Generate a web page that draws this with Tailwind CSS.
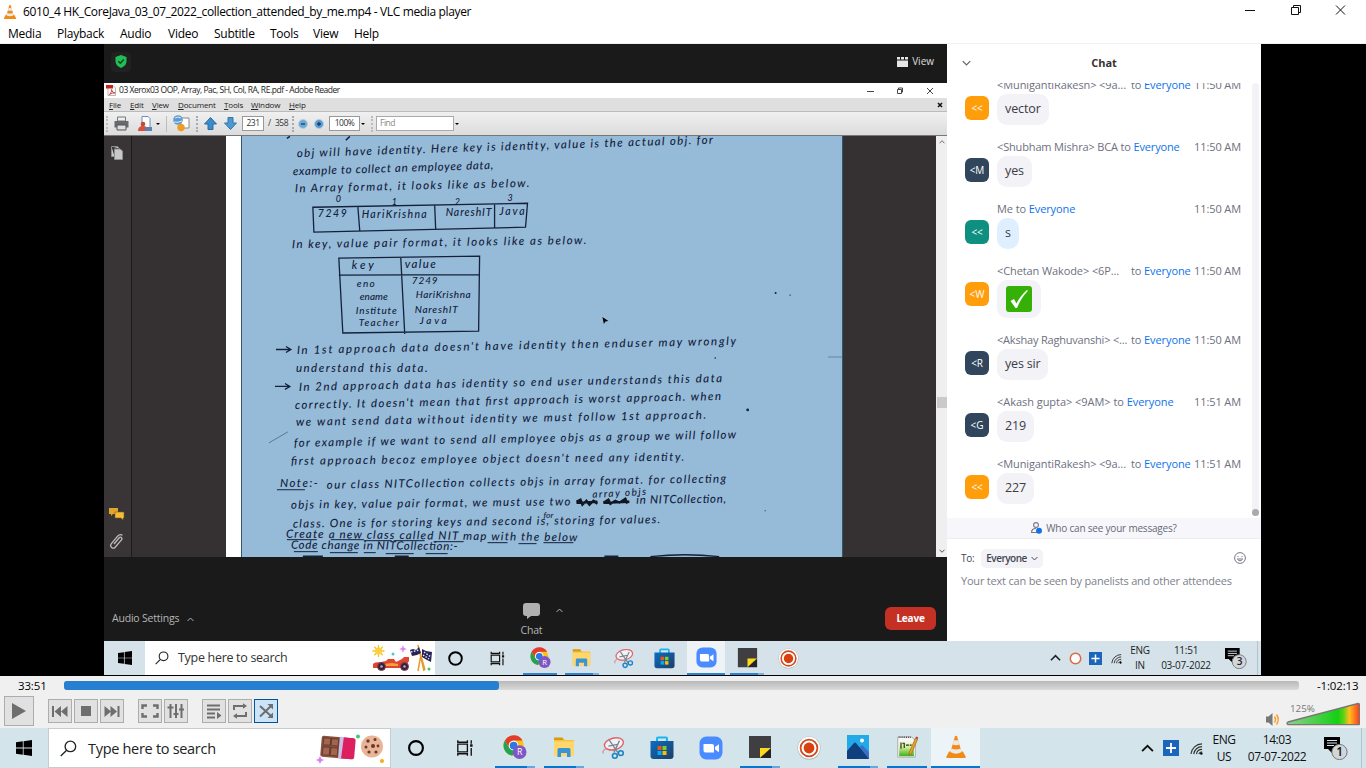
<!DOCTYPE html>
<html lang="en">
<head>
<meta charset="utf-8">
<title>VLC media player</title>
<script src="https://cdn.jsdelivr.net/npm/@tailwindcss/browser@4"></script>
</head>
<body class="w-[1366px] h-[768px] overflow-hidden flex flex-col bg-white text-black font-['Open_Sans','Noto_Sans',sans-serif]">
<svg width="0" height="0" class="absolute">
  <defs>
    <linearGradient id="sky" x1="0" y1="0" x2="1" y2="1"><stop offset="0" stop-color="#0a6fc4"/><stop offset="1" stop-color="#1f3d66"/></linearGradient>
    <linearGradient id="vol" x1="0" x2="1" y1="0" y2="0"><stop offset="0" stop-color="#8fd08f"/><stop offset=".7" stop-color="#14d014"/><stop offset=".78" stop-color="#5fd014"/><stop offset=".86" stop-color="#ffc01e"/><stop offset="1" stop-color="#ff3c1e"/></linearGradient>
    <linearGradient id="npp" x1="0" x2="0" y1="0" y2="1"><stop offset="0" stop-color="#f4fbe8"/><stop offset=".4" stop-color="#d3f08f"/><stop offset="1" stop-color="#3fae1f"/></linearGradient>
    <symbol id="win" viewBox="0 0 16 16"><path d="M0 2.2 6.8 1.3V7.6H0zM7.6 1.2 16 0V7.6H7.6zM0 8.4H6.8V14.7L0 13.8zM7.6 8.4H16V16L7.6 14.8z"/></symbol>
    <symbol id="find" viewBox="0 0 18 18"><g fill="none" stroke="#222" stroke-width="1.4"><circle cx="11" cy="6.8" r="5.6"/><path d="M7 10.8.8 17"/></g></symbol>
    <symbol id="ring" viewBox="0 0 18 18"><circle cx="9" cy="9" r="7.2" fill="none" stroke="#000" stroke-width="2.2"/></symbol>
    <symbol id="tv" viewBox="0 0 18 18"><g fill="none" stroke="#111" stroke-width="1.4"><path d="M1.500 5h10v8h-10zM1.500 1v2h10V1M1.500 17v-2h10v2M15.500 1v3.500M15.500 9v8"/></g><path d="M14.300 5h2.600v2.800h-2.600z" fill="#111"/></symbol>
    <symbol id="chrome" viewBox="0 0 26 26"><circle cx="11.500" cy="11.500" r="11" fill="#fbc116"/><path d="M2 6A11 11 0 0 1 21.200 6H11.500a5.500 5.500 0 0 0-5 7.800z" fill="#e33b2e"/><path d="M2 6a11 11 0 0 0 8 16.400l5-8.400a5.500 5.500 0 0 1-8.500-.2z" fill="#23a455"/><circle cx="11.500" cy="11.500" r="5.200" fill="#fff"/><circle cx="11.500" cy="11.500" r="4.200" fill="#2878e6"/><circle cx="18" cy="18.500" r="7.500" fill="#7e57c2"/><text x="18" y="22" font-size="9.500" text-anchor="middle" fill="#fff">R</text></symbol>
    <symbol id="folder" viewBox="0 0 24 24"><path d="M2 3h9l2 2h9v16H2z" fill="#f5c24a"/><path d="M2 2.500h8.500l1 2.500H2z" fill="#d89a12"/><path d="M2 6.500h20V21H2z" fill="#ffd76a"/><path d="M5.500 22v-7.500q0-1.500 1.500-1.500h10q1.500 0 1.500 1.500V22h-3.500v-4h-6v4z" fill="#3a93d6"/></symbol>
    <symbol id="snip" viewBox="0 0 26 26"><g fill="none"><ellipse cx="14" cy="8.500" rx="10.500" ry="6.300" transform="rotate(-14 14 8.500)" stroke="#e2606a" stroke-width="1.500" fill="#eef3f6"/><path d="M3 19Q0 17 5 14" stroke="#d99aa2" stroke-width="1.500"/><path d="M9 4.500 19 19M20 5 14 18M8 11l10-2" stroke="#7c858c" stroke-width="1.400"/><circle cx="15" cy="21.500" r="2.600" stroke="#1b84c4" stroke-width="1.700"/><circle cx="21.500" cy="18.500" r="2.600" stroke="#1b84c4" stroke-width="1.700"/></g></symbol>
    <symbol id="store" viewBox="0 0 24 24"><path d="M7 6V2.500q0-1 1-1h8q1 0 1 1V6" fill="none" stroke="#19b5ef" stroke-width="2"/><path d="M.5 5h23v15q0 3-3 3h-17q-3 0-3-3z" fill="url(#sky)"/><path d="M7.500 10h4v4h-4z" fill="#f1511b"/><path d="M12.500 10h4v4h-4z" fill="#80cc28"/><path d="M7.500 15h4v4h-4z" fill="#00adef"/><path d="M12.500 15h4v4h-4z" fill="#fbbc09"/></symbol>
    <symbol id="zoomi" viewBox="0 0 24 24"><rect x=".5" y=".5" width="23" height="23" rx="7" fill="#4a8cff"/><path d="M4.500 8h8.500q2 0 2 2v6.500H6.500q-2 0-2-2zM16 11l4-2.800v8L16 13.600z" fill="#fff"/></symbol>
    <symbol id="sticky" viewBox="0 0 24 24"><path d="M1 1h22v12l-11 10H1z" fill="#3f3f41"/><path d="M12 23V13h11z" fill="#ffd917"/><path d="M23 13v10H12z" fill="#242426"/></symbol>
    <symbol id="rec" viewBox="0 0 24 24"><circle cx="12" cy="12" r="11.500" fill="#a9aeb2"/><circle cx="12" cy="11.800" r="11" fill="#fff"/><circle cx="12" cy="12" r="8.400" fill="none" stroke="#cf4a1f" stroke-width="1.800"/><circle cx="12" cy="12" r="5.400" fill="#d8400f"/></symbol>
    <symbol id="photos" viewBox="0 0 24 24"><path d="M1 0h22v24H1z" fill="#22a9e8"/><path d="M12 24 10 16l6-6 7 7v7z" fill="#3b6fc9"/><path d="M1 16l7-8q1-1 2 0l13 16H1z" fill="#103f7e"/><circle cx="16" cy="5.500" r="2" fill="#fff"/></symbol>
    <symbol id="note" viewBox="0 0 24 26"><path d="M2 2h15l4 4v18H2z" fill="#f7f7f7" stroke="#999" stroke-width=".8"/><path d="M3.500 6.500h16V23h-16z" fill="url(#npp)"/><path d="M3 2.500h13" stroke="#444" stroke-dasharray="1 1" stroke-width="1.500"/><path d="M5.500 8v7M7 9h2v5M11 11h3M15 11h2" stroke="#222" fill="none" stroke-width="1.200"/><path d="M14.500 19 21 3.500l2.500 1L17 20l-2.700 2z" fill="#e8a12a" stroke="#8a5a12" stroke-width=".6"/><path d="m21 3.500.8-2 2.400 1-.7 2z" fill="#c7463a"/></symbol>
    <symbol id="cone" viewBox="0 0 24 26"><path d="M4.500 18h15l3 5.500q.3 1.500-.8 1.500H2.300q-1.100 0-.8-1.500z" fill="#f28a16"/><path d="M10.800 1.500q1.200-1.500 2.400 0L18.500 20q-6.500 3.500-13 0z" fill="#f28a16"/><path d="m9.600 5.500-1.400 4.800q3.800 1.500 7.600 0L14.400 5.500q-2.400 1-4.800 0zM7 14.500l-1.200 4q6.200 3.400 12.400 0L17 14.500q-5 2.500-10 0z" fill="#e9e9e9"/></symbol>
    <symbol id="chev" viewBox="0 0 12 8"><path d="m1 6.500 5-5 5 5" fill="none" stroke="currentColor" stroke-width="1.700"/></symbol>
    <symbol id="plus" viewBox="0 0 16 16"><path d="M0 0h16v16H0z" fill="#1b66bb"/><path d="M8 3v10M3 8h10" stroke="#fff" stroke-width="1.800"/></symbol>
    <symbol id="wifi" viewBox="0 0 14 14"><g fill="none" stroke="#333" stroke-width="1.200"><path d="M1 13A12 12 0 0 1 13 2M4 13A9 9 0 0 1 13 5M7 13a6 6 0 0 1 6-5M9.500 13A4 4 0 0 1 13 10.500"/></g><circle cx="12.200" cy="12.300" r="1.300"/></symbol>
    <symbol id="msg" viewBox="0 0 24 24"><path d="M0 1h16v12H8v4l-4-4H0z"/><path d="M3 4.500h10M3 7h10M3 9.500h7" stroke="#d5e2e9" stroke-width="1"/><circle cx="15.500" cy="16" r="7.600" fill="#d0d6da" stroke="#777" stroke-width="1"/></symbol>
  </defs>
</svg>

<!-- Title bar -->
<header class="h-[23px] shrink-0 flex items-center pl-[3px]">
  <svg class="w-[14px] h-[16px]"><use href="#cone"/></svg>
  <span class="ml-[6px] text-[12px] tracking-[-0.35px] whitespace-nowrap">6010_4 HK_CoreJava_03_07_2022_collection_attended_by_me.mp4 - VLC media player</span>
  <svg class="ml-auto mr-[17px] -mt-[3px] w-[104px] h-[14px]" viewBox="0 0 104 14" fill="none" stroke="#111"><path d="M0 7.500h10M46.500 4.500h7v7h-7zM48.500 4V2.500h7v7H54M91 2.500l9 9M100 2.500l-9 9"/></svg>
</header>
<nav class="h-[21px] shrink-0 flex items-center pl-2 pt-[2px] gap-[15px] text-[12px] tracking-[-0.25px] border-b border-[#f0f0f0]">
  <span class="w-[34px]">Media</span><span class="w-[48px]">Playback</span><span class="w-[33px]">Audio</span><span class="w-[31px]">Video</span><span class="w-[41px]">Subtitle</span><span class="w-[28px]">Tools</span><span class="w-[26px]">View</span><span>Help</span>
</nav>

<!-- Video -->
<main class="h-[632px] shrink-0 bg-black pl-[104px] pr-[105px] flex flex-col">
  <div class="h-[597px] flex">
    <section class="w-[843px] flex flex-col bg-[#1a1a1a]">
      <div class="h-[39px] flex items-center justify-between pl-[7px] pr-[13px]">
        <span class="w-5 h-5 -mt-1 rounded bg-[#212121] flex items-center justify-center"><svg class="w-[12px] h-[13px]" viewBox="0 0 12 13"><path d="M6 0 11.500 2v4.500Q11 11 6 13 1 11 .5 6.500V2z" fill="#20bf55"/><path d="m3.300 6.300 2 2L8.800 4.600" fill="none" stroke="#133c20" stroke-width="1.400"/></svg></span>
        <span class="flex items-center gap-1 text-[10px] text-[#dedede] -mt-1"><svg class="w-[11px] h-[10px]" viewBox="0 0 11 10" fill="#e6e6e6"><path d="M0 0h3v2.500H0zM4 0h3v2.500H4zM8 0h3v2.500H8zM0 3.500h11V10H0z"/></svg>View</span>
      </div>
      <!-- Adobe Reader -->
      <div class="h-[15px] bg-white flex items-center text-[8.500px] tracking-[-0.46px] text-[#222] pl-[2px]">
        <svg class="w-[10px] h-[11px] mr-[3px]" viewBox="0 0 10 11"><path d="M2 .5h5l2.500 2.500v7.500H2z" fill="#fff" stroke="#999" stroke-width=".7"/><path d="M0 0h7v3.500H0z" fill="#c8231c"/><path d="M3.500 9.500Q6 7 5.500 4.500q1 3.500 3.500 3.500-3-.5-5.500 1.500z" fill="none" stroke="#c8231c" stroke-width=".8"/></svg>
        <span class="whitespace-nowrap">03 Xerox03 OOP, Array, Pac, SH, Col, RA, RE.pdf - Adobe Reader</span>
        <svg class="ml-auto mr-[12px] w-[68px] h-[8px]" viewBox="0 0 68 8" fill="none" stroke="#333" stroke-width=".9"><path d="M0 4.500h7M30.500 2.500h4v4h-4zM31.500 2V1h4v4h-1M60 1l6 6M66 1l-6 6"/></svg>
      </div>
      <div class="h-[13px] bg-[#dfdfe0] flex items-center text-[8px] tracking-[-0.15px] text-[#222] pl-[5px] gap-[9px]">
        <span class="w-[12px]"><u>F</u>ile</span><span class="w-[13px]"><u>E</u>dit</span><span class="w-[17px]"><u>V</u>iew</span><span class="w-[37px]"><u>D</u>ocument</span><span class="w-[18px]"><u>T</u>ools</span><span class="w-[29px]"><u>W</u>indow</span><span><u>H</u>elp</span><svg class="ml-auto mr-1 w-[6px] h-[6px]" viewBox="0 0 6 6" stroke="#111" stroke-width="1.500"><path d="m1 1 4 4M5 1 1 5"/></svg>
      </div>
      <div class="h-[25px] bg-linear-to-b from-[#f0f0f0] to-[#dcdcdd] border-t border-[#bbb] border-b-[#777] border-b flex items-center text-[8.500px] tracking-[-0.5px] text-[#333] pl-[2px]">
        <i class="w-[2px] h-4 border-l-2 border-dotted border-[#bbb]"></i>
        <svg class="ml-[6px] w-[15px] h-[15px]" viewBox="0 0 15 15"><path d="M3.500 1h8v4h-8z" fill="#eee" stroke="#777"/><path d="M.5 5h14v6.500H.5z" fill="#666a70"/><path d="M3 9h9v5H3z" fill="#ddd" stroke="#555"/></svg>
        <svg class="ml-[8px] w-[16px] h-[16px]" viewBox="0 0 16 16"><path d="M5 .500h6l2 2v9H5z" fill="#fff" stroke="#6b8fb5"/><circle cx="6" cy="8" r="2.300" fill="#c24b36"/><path d="M1 15q0-5 5-5t5 5z" fill="#d5533c"/><path d="M8 11h7v4H8z" fill="#5b82ae"/></svg>
        <span class="w-0 h-0 ml-[3px] border-x-2 border-x-transparent border-t-2 border-t-black"></span>
        <i class="ml-[6px] w-px h-4 bg-[#bbb]"></i>
        <svg class="ml-[5px] w-[18px] h-[17px]" viewBox="0 0 18 17"><path d="M8 3h9v10H8z" fill="#fff" stroke="#888"/><circle cx="6" cy="5" r="4.800" fill="#5f9bd0"/><path d="M3 3q3-2 6 0M2 7q4 1 8-1" stroke="#d9edf9" fill="none"/><circle cx="9" cy="12.500" r="3.700" fill="#f09b21"/></svg>
        <i class="ml-[6px] w-[2px] h-4 border-l-2 border-dotted border-[#aaa]"></i>
        <svg class="ml-[6px] w-[13px] h-[13px]" viewBox="0 0 13 13"><path d="M6.500.5 12.500 7H9v5.500H4V7H.5z" fill="#3b8bc9" stroke="#2a6ca3"/></svg>
        <svg class="ml-[7px] w-[13px] h-[13px]" viewBox="0 0 13 13"><path d="M6.500 12.500 12.500 6H9V.5H4V6H.5z" fill="#4c98d2" stroke="#2f77ad"/></svg>
        <span class="ml-[5px] w-[22px] h-[15px] border border-[#999] bg-white flex items-center justify-center">231</span>
        <span class="ml-[4px] w-[3px]">/</span><span class="ml-[4px] w-[13px]">358</span>
        <i class="ml-[4px] w-[2px] h-4 border-l-2 border-dotted border-[#aaa]"></i>
        <svg class="ml-[4px] w-[10px] h-[10px]" viewBox="0 0 10 10"><circle cx="5" cy="5" r="4.500" fill="#6fa9d6" stroke="#b7cee0"/><path d="M3 5h4" stroke="#123e68" stroke-width="1.300"/></svg>
        <svg class="ml-[6px] w-[10px] h-[10px]" viewBox="0 0 10 10"><circle cx="5" cy="5" r="4.500" fill="#5b9cd0" stroke="#b7cee0"/><path d="M3 5h4M5 3v4" stroke="#123e68" stroke-width="1.300"/></svg>
        <span class="ml-[5px] w-[31px] h-[15px] border border-[#999] bg-white flex items-center justify-center">100%</span>
        <span class="w-0 h-0 ml-[1px] border-x-2 border-x-transparent border-t-2 border-t-black"></span>
        <i class="ml-[6px] w-[2px] h-4 border-l-2 border-dotted border-[#bbb]"></i>
        <span class="ml-[3px] w-[78px] h-[15px] border border-[#aaa] bg-white flex items-center pl-[3px] text-[#888]">Find</span>
        <span class="w-0 h-0 ml-[1px] border-x-2 border-x-transparent border-t-2 border-t-black"></span>
      </div>
      <div class="h-[421px] flex bg-[#353133]">
        <aside class="w-[28px] bg-[#393536] border-r border-[#1d1a1b] flex flex-col items-center pt-[10px] pb-[7px] pr-[2px]">
          <svg class="w-[12px] h-[14px]" viewBox="0 0 12 14"><path d="M3.500 3v10.500h8V5l-2.500-2zM.5.5h6l2 2M.5.5v10h3" fill="#c9c9c9" stroke="#8f8f8f"/></svg>
          <svg class="mt-auto w-[17px] h-[14px]" viewBox="0 0 17 14"><path d="M1 1h9v6H5L3 9V7H1z" fill="#e0a52a"/><path d="M7 5h9v6h-1v2l-2-2H7z" fill="#f2bc3c" stroke="#7d5a14" stroke-width=".6"/></svg>
          <svg class="mt-[12px] w-[15px] h-[17px]" viewBox="0 0 15 17" fill="none" stroke="#bdbdbd" stroke-width="1.300"><path d="m5 11 5-6q1.500-1.500 2.500-.3t-.3 2.500l-6 7Q4.500 16 2.600 14.400t-.2-3.700l6.200-7.500Q11 .500 13.500 2.300"/></svg>
        </aside>
        <div class="w-[94px]"></div>
        <div class="w-[15px] bg-white"></div>
        <svg class="w-[602px] h-[421px] bg-[#95bbd8] border-x border-[#33566f] font-['Lato',sans-serif]" viewBox="241 136 601 421" font-size="11.500" font-style="italic" font-weight="500" fill="#14203c">
          <path d="M286 138l3-2M345 140l4-4M302 556.500h20M394 556.500h14M604 556.500h14M650 557q35-4 69 0" stroke="#14203c" stroke-width="1.500" fill="none"/>
          <text x="296" y="157" textLength="417" transform="rotate(-1.900 296 157)">obj will have identity. Here key is identity, value is the actual obj. for</text>
          <text x="292" y="175" textLength="201" transform="rotate(-1.800 292 175)">example to collect an employee data,</text>
          <text x="294" y="192" textLength="235" transform="rotate(-1.300 294 192)">In Array format, it looks like as below.</text>
          <g font-size="9"><text x="335" y="202">0</text><text x="391" y="205">1</text><text x="454" y="205">2</text><text x="507" y="201">3</text></g>
          <g font-size="10.500"><text x="317" y="217" textLength="29">7249</text><text x="361" y="218" textLength="65">HariKrishna</text><text x="445" y="216" textLength="46">NareshIT</text><text x="499" y="215" textLength="25">Java</text></g>
          <text x="291" y="248" textLength="295" transform="rotate(-.800 291 248)">In key, value pair format, it looks like as below.</text>
          <g fill="none" stroke="#14203c" stroke-width="1.300"><path d="M312 207 527 203 525 227 313 232zM357 206l2 25M434 205l1 24M494 204v24"/><path d="M338 258 479 256 478 331 342 333zM338 275l141 -.500M400 257l4 77"/></g>
          <text x="351" y="269" textLength="22">key</text><text x="404" y="268" textLength="31">value</text>
          <g font-size="10"><text x="356" y="287" textLength="18">eno</text><text x="411" y="284" textLength="26">7249</text><text x="359" y="300" textLength="28">ename</text><text x="415" y="298" textLength="55">HariKrishna</text><text x="355" y="314" textLength="41">Institute</text><text x="414" y="313" textLength="43">NareshIT</text><text x="358" y="326" textLength="40">Teacher</text><text x="419" y="324" textLength="27">Java</text></g>
          <path d="M275 349.500h15m-5-3 5 3-5 3M274 386.500h15m-5-3 5 3-5 3" fill="none" stroke="#14203c" stroke-width="1.300"/>
          <text x="296" y="354" textLength="440" transform="rotate(-1.200 296 354)">In 1st approach data doesn't have identity then enduser may wrongly</text>
          <text x="295" y="372" textLength="132">understand this data.</text>
          <text x="298" y="391" textLength="424" transform="rotate(-1.200 298 391)">In 2nd approach data has identity so end user understands this data</text>
          <text x="294" y="409" textLength="427" transform="rotate(-1.200 294 409)">correctly. It doesn't mean that first approach is worst approach. when</text>
          <text x="295" y="426" textLength="411" transform="rotate(-1 295 426)">we want send data without identity we must follow 1st approach.</text>
          <path d="m268 443 19-11" stroke="#5a7896"/>
          <text x="293" y="447" textLength="443" transform="rotate(-1.100 293 447)">for example if we want to send all employee objs as a group we will follow</text>
          <text x="290" y="465" textLength="394" transform="rotate(-.600 290 465)">first approach becoz employee object doesn't need any identity.</text>
          <text x="279" y="487" textLength="38">Note:-</text><path d="M276 490h28" stroke="#14203c"/>
          <text x="326" y="489" textLength="400" transform="rotate(-.900 326 489)">our class NITCollection collects objs in array format. for collecting</text>
          <text x="290" y="509" textLength="280" transform="rotate(-.700 290 509)">objs in key, value pair format, we must use two</text>
          <path d="m576 502 4-2 2 5 4-4 3 4 4-4 4 3m-21-1 21-1m6 1 5-3 2 4 5-3 4 2 6-4 2 5m-24-1 26-1" fill="none" stroke="#101622" stroke-width="2.400"/>
          <text x="592" y="498" font-size="10" textLength="54" transform="rotate(-3 592 498)">array objs</text>
          <text x="636" y="504" textLength="90" transform="rotate(-.700 636 504)">in NITCollection,</text>
          <text x="543" y="518" font-size="8.500">for</text>
          <text x="292" y="528" textLength="368" transform="rotate(-.700 292 528)">class. One is for storing keys and second is, storing for values.</text>
          <text x="285" y="538" textLength="292" transform="rotate(.700 285 538)">Create a new class called NIT map with the below</text>
          <text x="290" y="549" textLength="167" transform="rotate(.500 290 549)">Code change in NITCollection:-</text>
          <path d="M286 540h30M330 540h33M363 541h28M393 541h31M433 542h30M487 543h20M518 544h18M543 543h30M293 552h24M329 553h28M363 553h12M385 554h28M425 554h22" stroke="#14203c"/>
          <path d="m602 317 6 4-3 .500-1.500 2.500z" fill="#000"/><path d="M828 357h14" stroke="#5f89a8"/>
          <circle cx="747.500" cy="410" r="1.400"/><circle cx="775.500" cy="293" r="1"/><circle cx="790" cy="295" r=".7"/><circle cx="715" cy="358" r=".8"/><circle cx="765" cy="511" r=".6"/>
        </svg>
        <div class="w-[93px]"></div>
        <div class="flex-1 bg-[#f0eff0] flex flex-col items-center justify-between py-1">
          <svg class="w-[6px] h-[4px] text-[#555]"><use href="#chev"/></svg>
          <span class="w-[10px] h-[11px] bg-[#cbc9ca] mt-[112px]"></span>
          <svg class="w-[6px] h-[4px] text-[#333] rotate-180"><use href="#chev"/></svg>
        </div>
      </div>
      <!-- Meeting controls -->
      <div class="h-[84px] flex text-[#b5b5b5] text-[10.500px] tracking-[-0.2px]">
        <div class="w-[400px] flex items-center pl-[8px] pt-[40px] gap-[8px]">Audio Settings<svg class="w-[7px] h-[5px]"><use href="#chev"/></svg></div>
        <div class="w-[55px] flex flex-col items-center pt-[46px]"><svg class="w-[17px] h-[16px]" viewBox="0 0 17 16"><path d="M3 0h11q3 0 3 3v7q0 3-3 3H8l-4 3v-3H3q-3 0-3-3V3q0-3 3-3z" fill="#b1b1b1"/></svg><span class="mt-[3px] leading-4">Chat</span></div>
        <svg class="mt-[51px] -ml-[3px] w-[7px] h-[5px]"><use href="#chev"/></svg>
        <div class="flex-1 flex justify-end pr-[11px] pt-[50px]"><span class="w-[51px] h-[23px] rounded-[6px] bg-[#c43124] text-white font-bold text-[10px] flex items-center justify-center">Leave</span></div>
      </div>
    </section>

    <!-- Chat panel -->
    <section class="flex-1 bg-white flex flex-col text-[#6e7080]">
      <div class="h-[38px] mb-px flex items-center px-[15px] shrink-0"><svg class="w-[9px] h-[6px] rotate-180 text-[#666]"><use href="#chev"/></svg><b class="flex-1 text-center pr-[9px] text-[11px] text-[#333]">Chat</b></div>
      <div class="h-[435px] flex shrink-0 overflow-hidden">
        <div class="w-[305px] pl-[18px] pr-[11px] -mt-[6px] text-[11px] tracking-[-0.1px]">
          <div class="h-[62px]"><div class="h-[17px] pl-[32px] flex items-center whitespace-nowrap"><span class="w-[134px]">&lt;MunigantiRakesh&gt; &lt;9a...</span><span>to <span class="text-[#0e72ed]">Everyone</span></span><span class="ml-auto">11:50 AM</span></div><div class="flex gap-[8px]"><span class="mt-[2px] w-6 h-6 rounded-[6px] bg-[#ff9d0b] text-white text-[10px] flex items-center justify-center">&lt;&lt;</span><span class="h-[31px] px-[8px] rounded-[10px] bg-[#f2f2f7] text-[#3c3c46] text-[12.500px] flex items-center">vector</span></div></div>
          <div class="h-[62px]"><div class="h-[17px] pl-[32px] flex items-center whitespace-nowrap"><span class="tracking-[-0.15px]">&lt;Shubham Mishra&gt; BCA to <span class="text-[#0e72ed]">Everyone</span></span><span class="ml-auto">11:50 AM</span></div><div class="flex gap-[8px]"><span class="mt-[2px] w-6 h-6 rounded-[6px] bg-[#31465c] text-white text-[10px] flex items-center justify-center">&lt;M</span><span class="h-[31px] px-[8px] rounded-[10px] bg-[#f2f2f7] text-[#3c3c46] text-[12.500px] flex items-center">yes</span></div></div>
          <div class="h-[62px]"><div class="h-[17px] pl-[32px] flex items-center whitespace-nowrap"><span>Me to <span class="text-[#0e72ed]">Everyone</span></span><span class="ml-auto">11:50 AM</span></div><div class="flex gap-[8px]"><span class="mt-[2px] w-6 h-6 rounded-[6px] bg-[#0e8f80] text-white text-[10px] flex items-center justify-center">&lt;&lt;</span><span class="h-[31px] px-[8px] rounded-[10px] bg-[#dfefff] text-[#3c3c46] text-[12.500px] flex items-center">s</span></div></div>
          <div class="h-[69px]"><div class="h-[17px] pl-[32px] flex items-center whitespace-nowrap"><span class="w-[134px]">&lt;Chetan Wakode&gt; &lt;6P...</span><span>to <span class="text-[#0e72ed]">Everyone</span></span><span class="ml-auto">11:50 AM</span></div><div class="flex gap-[8px]"><span class="mt-[2px] w-6 h-6 rounded-[6px] bg-[#ff9d0b] text-white text-[10px] flex items-center justify-center">&lt;W</span><span class="h-[38px] w-[44px] rounded-[10px] bg-[#f2f2f7] flex items-center justify-center"><svg class="w-[26px] h-[26px]" viewBox="0 0 26 26"><rect width="26" height="26" rx="3" fill="#35b006"/><path d="M4.500 15 8 13l2.500 4.500Q14 10 21 4l1 .800Q15 12 11 22H9.500z" fill="#fff"/></svg></span></div></div>
          <div class="h-[62px]"><div class="h-[17px] pl-[32px] flex items-center whitespace-nowrap"><span class="w-[134px] tracking-[-0.2px]">&lt;Akshay Raghuvanshi&gt; &lt;...</span><span>to <span class="text-[#0e72ed]">Everyone</span></span><span class="ml-auto">11:50 AM</span></div><div class="flex gap-[8px]"><span class="mt-[2px] w-6 h-6 rounded-[6px] bg-[#31465c] text-white text-[10px] flex items-center justify-center">&lt;R</span><span class="h-[31px] px-[8px] rounded-[10px] bg-[#f2f2f7] text-[#3c3c46] text-[12.500px] flex items-center tracking-[-0.2px]">yes sir</span></div></div>
          <div class="h-[62px]"><div class="h-[17px] pl-[32px] flex items-center whitespace-nowrap"><span class="tracking-[-0.04px]">&lt;Akash gupta&gt; &lt;9AM&gt; to <span class="text-[#0e72ed]">Everyone</span></span><span class="ml-auto">11:51 AM</span></div><div class="flex gap-[8px]"><span class="mt-[2px] w-6 h-6 rounded-[6px] bg-[#31465c] text-white text-[10px] flex items-center justify-center">&lt;G</span><span class="h-[31px] px-[8px] rounded-[10px] bg-[#f2f2f7] text-[#3c3c46] text-[12.500px] flex items-center">219</span></div></div>
          <div class="h-[56px]"><div class="h-[17px] pl-[32px] flex items-center whitespace-nowrap"><span class="w-[134px]">&lt;MunigantiRakesh&gt; &lt;9a...</span><span>to <span class="text-[#0e72ed]">Everyone</span></span><span class="ml-auto">11:51 AM</span></div><div class="flex gap-[8px]"><span class="mt-[2px] w-6 h-6 rounded-[6px] bg-[#ff9d0b] text-white text-[10px] flex items-center justify-center">&lt;&lt;</span><span class="h-[31px] px-[8px] rounded-[10px] bg-[#f2f2f7] text-[#3c3c46] text-[12.500px] flex items-center">227</span></div></div>
        </div>
        <div class="w-[7px] h-[433px] rounded-full bg-[#f3f2f6] flex items-end"><i class="w-[7px] h-[7px] rounded-full bg-[#a9a9ae]"></i></div>
      </div>
      <div class="h-[21px] shrink-0 bg-[#f7f7fb] border-b border-[#ececf2] flex items-center justify-center gap-[4px] text-[10px] tracking-[-0.2px] text-[#666877]">
        <svg class="w-[11px] h-[12px]" viewBox="0 0 11 12"><g fill="none" stroke="#77798a" stroke-width="1.100"><circle cx="5" cy="3" r="2.400"/><path d="M6 10.500H.600Q.500 6.500 5 6.500"/></g><circle cx="8" cy="8.800" r="3" fill="#0e72ed"/></svg>Who can see your messages?
      </div>
      <div class="flex items-center mt-[10px] h-[18px] pl-[14px] pr-[15px] text-[10px] tracking-[-0.2px] text-[#444654]"><span class="w-[20px]">To:</span><span class="h-[19px] w-[62px] rounded-[5px] bg-[#f2f2f7] flex items-center justify-center gap-[4px] font-semibold tracking-[-0.5px]">Everyone<svg class="w-[7px] h-[5px] rotate-180" stroke-width="2"><use href="#chev"/></svg></span>
        <svg class="ml-auto w-[12px] h-[12px]" viewBox="0 0 12 12" fill="none" stroke="#777987"><circle cx="6" cy="6" r="5.400"/><path d="M3.300 7q2.700 3.500 5.400 0zM4 4v1M8 4v1"/></svg></div>
      <div class="pl-[14px] mt-[6px] text-[11px] tracking-[-0.2px] text-[#7d7f8c] whitespace-nowrap">Your text can be seen by panelists and other attendees</div>
    </section>
  </div>

  <!-- Recorded desktop taskbar -->
  <div class="h-[34px] bg-[#d5e2ea] flex">
    <div class="w-[41px] flex items-center justify-center"><svg class="w-[14px] h-[14px]"><use href="#win"/></svg></div>
    <div class="w-[290px] bg-white flex items-center pl-[10px] pr-[1px]">
      <svg class="w-[14px] h-[14px]"><use href="#find"/></svg><span class="ml-[9px] mt-px text-[12.500px] tracking-[-0.3px] text-[#333] whitespace-nowrap">Type here to search</span>
      <svg class="ml-auto w-[62px] h-[28px]" viewBox="0 0 62 28"><path d="M6.500 1v12M.500 7h12M2.300 2.800l8.400 8.400M10.700 2.800l-8.400 8.400" stroke="#f5c12c" stroke-width="1.300"/><circle cx="6.500" cy="7" r="3.500" fill="#fbd03b"/><path d="m31 1 1 3 3 1-3 1-1 3-1-3-3-1 3-1z" fill="#e07ff0"/><circle cx="21" cy="10" r="1.500" fill="#4fc6e0"/><path d="M1 20q1-2 8-2l5-1 2-2h6l2 3 6-3 2-2h5v4l-2 3v4H1z" fill="#e1452d"/><path d="M12 20l8-1 6 1v2H12z" fill="#f7a33a"/><g fill="#2b2448" stroke="#8a3f4a" stroke-width="1"><circle cx="9.500" cy="22.500" r="4"/><circle cx="32.500" cy="22.500" r="4"/></g><g fill="#d9a0a0"><circle cx="9.500" cy="22.500" r="1.300"/><circle cx="32.500" cy="22.500" r="1.300"/></g><path d="m46 27 3-17M52 27 46 1M49 12l4 14" stroke="#e99a2d" stroke-width="1.500"/><path d="m38 6 3-1 3 1 3-3 2 6-4 2-5 1zM50 5l4 2 6 1-1 10-4-2-5-3z" fill="#282456"/><path d="m39 8 8-2M52 8l7 5M51 11l6 4" stroke="#e8e8f4" fill="none" stroke-width="1.500" stroke-dasharray="1.500 1.500"/><circle cx="57" cy="25" r="1.500" fill="#3fc46b"/></svg>
    </div>
    <div class="flex [&>span]:w-[41.400px] [&>span]:flex [&>span]:flex-col [&>span]:items-center [&_svg]:my-auto [&_svg]:w-[21px] [&_svg]:h-[21px] [&_i]:w-[34px] [&_i]:h-[2px] [&_i]:bg-[#2c84cf] [&_i]:border-r-[6px] [&_i]:border-[#78b0dd]">
      <span><svg class="scale-75"><use href="#ring"/></svg></span><span class="mr-[2px]"><svg class="scale-[.72]"><use href="#tv"/></svg></span>
      <span><svg><use href="#chrome"/></svg><b class="w-[34px] h-[2px] bg-[#2c84cf]"></b></span><span><svg><use href="#folder"/></svg><i></i></span><span><svg><use href="#snip"/></svg></span><span><svg><use href="#store"/></svg></span><span class="bg-[#edf3f7] bg-clip-content px-[2px]"><svg><use href="#zoomi"/></svg><b class="w-full h-[2px] bg-[#2c84cf]"></b></span><span><svg><use href="#sticky"/></svg><i></i></span><span><svg><use href="#rec"/></svg></span>
    </div>
    <div class="flex-1 flex items-center justify-end text-[10px] tracking-[-0.25px] leading-[15px] text-[#222]">
      <svg class="w-[11px] h-[8px]"><use href="#chev"/></svg><svg class="ml-[8px] w-[13px] h-[13px]" viewBox="0 0 13 13"><circle cx="6.500" cy="6.500" r="5.200" fill="#fff" stroke="#dc6846" stroke-width="1.500"/></svg><svg class="ml-[7px] w-[13px] h-[13px]"><use href="#plus"/></svg><svg class="ml-[9px] w-[11px] h-[11px]"><use href="#wifi"/></svg>
      <span class="ml-[5px] w-[26px] text-center">ENG<br>IN</span><span class="ml-[5px] w-[56px] text-center whitespace-nowrap">11:51<br>03-07-2022</span>
      <span class="ml-[11px] relative w-[22px] h-[22px]"><svg class="w-[22px] h-[22px]"><use href="#msg"/></svg><span class="absolute left-[10px] top-[7px] w-[9px] text-center font-semibold">3</span></span><i class="ml-[10px] mr-[3px] w-px h-full bg-[#b3c2cb]"></i>
    </div>
  </div>
</main>

<!-- Playback controls -->
<section class="h-[52px] shrink-0 bg-[#f0f0f0] flex flex-col">
  <div class="h-[20px] flex items-center text-[11.500px] tracking-[-0.15px] pl-[18px]">
    <span class="w-[46px]">33:51</span>
    <div class="w-[1235px] h-[9px] rounded-[3px] bg-linear-to-b from-[#b8b8b8] to-[#dadada] -mt-[2px]"><div class="w-[435px] h-[9px] rounded-[3px] bg-[#267fd1]"></div></div>
    <span class="ml-[18px] whitespace-nowrap">-1:02:13</span>
  </div>
  <div class="h-[30px] flex items-center pl-[4px] [&>b]:w-[24px] [&>b]:h-[24px] [&>b]:border [&>b]:border-[#adadad] [&>b]:bg-[#e1e1e1] [&>b]:flex [&>b]:items-center [&>b]:justify-center">
    <span class="w-[30px] h-[30px] border border-[#adadad] bg-[#e1e1e1] flex items-center justify-center"><svg class="w-[14px] h-[16px]" viewBox="0 0 14 16"><path d="M0 0 14 8 0 16z" fill="#6e6e6e"/></svg></span>
    <b class="ml-[14px]"><svg width="16" height="11" fill="#6e6e6e"><path d="M0 0h2v11H0zM2.500 5.500 9 0v11zM9 5.500 15.500 0v11z"/></svg></b>
    <b class="ml-[2px]"><svg width="10" height="10"><path d="M0 0h10v10H0z" fill="#6e6e6e"/></svg></b>
    <b class="ml-[2px]"><svg width="16" height="11" fill="#6e6e6e"><path d="M13.500 0h2v11h-2zM13 5.500 6.500 0v11zM7 5.500.500 0v11z"/></svg></b>
    <b class="ml-[14px]"><svg width="18" height="14" fill="none" stroke="#6e6e6e" stroke-width="2.400"><path d="M6 1.500H1.500V5M12 1.500h4.500V5M1.500 9v3.500H6M16.500 9v3.500H12"/></svg></b>
    <b class="ml-[2px]"><svg width="18" height="14" fill="none" stroke="#6e6e6e" stroke-width="2"><path d="M3.500 0v14M.500 3.500h6M9 0v14M6.500 10h5M14.500 0v14M12 5.500h5"/></svg></b>
    <b class="ml-[14px]"><svg width="16" height="15"><path d="M1 1.500h13M1 5.500h13M1 9.500h8M1 13.500h8" stroke="#6e6e6e" stroke-width="2"/><path d="m11 8 4.500 3.500L11 15z" fill="#6e6e6e"/></svg></b>
    <b class="ml-[2px]"><svg width="16" height="16" fill="none" stroke="#6e6e6e" stroke-width="2"><path d="M2 7V3h11M14 9v4H3"/><path d="m11 .300 4 2.700-4 2.700zM5 10.300 1 13l4 2.700z" fill="#6e6e6e" stroke="none"/></svg></b>
    <span class="ml-[2px] w-[24px] h-[24px] border border-[#005499] bg-[#cce4f7] flex items-center justify-center"><svg width="15" height="14" fill="none" stroke="#6e6e6e" stroke-width="2"><path d="M1 2l11 10M1 12.500 12 2"/><path d="M8.500 0H14v5.500zM8.500 14H14V8.500z" fill="#6e6e6e" stroke="none"/></svg></span>
    <svg class="ml-auto mr-[6px] mt-[7px] w-[95px] h-[26px]" viewBox="0 0 95 26"><path d="M1 14.500h2.500l4-3.500v13l-4-3.500H1z" fill="#777"/><path d="M9.500 14.500q2 3 0 6M11.500 12.500q3.500 5 0 10" fill="none" stroke="#ff9a1e" stroke-width="1.400"/><path d="M23 20 93 1.500q1.500 0 1.500 1.500v18.500q0 1.200-1.200 1.200H23q-2-1.500 0-2.700z" fill="url(#vol)" stroke="#777" stroke-width="1.300"/><text x="25" y="9.500" font-size="9" textLength="25" lengthAdjust="spacingAndGlyphs" fill="#777">125%</text></svg>
  </div>
</section>

<!-- Taskbar -->
<footer class="h-[40px] shrink-0 bg-[#d4e4eb] flex">
  <div class="w-[48px] flex items-center justify-center"><svg class="w-[16px] h-[16px]"><use href="#win"/></svg></div>
  <div class="w-[343px] bg-white border border-[#c6cdd1] flex items-center pl-[11px] pr-[6px]">
    <svg class="w-[17px] h-[17px]"><use href="#find"/></svg><span class="ml-[11px] mt-px text-[14.500px] tracking-[-0.3px] text-[#222] whitespace-nowrap">Type here to search</span>
    <svg class="ml-auto w-[68px] h-[32px]" viewBox="0 0 68 32"><g transform="rotate(5 22 15)"><rect x="5" y="5" width="33" height="21" rx="2" fill="#8a5340"/><path d="M7 7h7v7H7zM15 7h7v7h-7zM7 16h7v8H7zM15 16h7v8h-7z" fill="#a2654e" stroke="#6a3b2c"/><path d="M25 5h12q2 0 2 2v17q0 2-2 2H25z" fill="#dc1f5e"/><path d="M23 4.500h4l-1 22h-3z" fill="#c9bfe8"/></g><circle cx="56" cy="14.500" r="11" fill="#e9b596"/><g fill="#6a382c"><circle cx="52" cy="9" r="1.700"/><circle cx="59" cy="7.500" r="1.500"/><circle cx="57" cy="14" r="2"/><circle cx="50" cy="15" r="1.500"/><circle cx="62" cy="14" r="1.400"/><circle cx="53" cy="20" r="1.600"/><circle cx="60" cy="20" r="1.600"/></g><circle cx="42" cy="4.500" r="2" fill="#45c86c"/><circle cx="66" cy="29" r="2" fill="#f7ac12"/><path d="m4 24 1.300 2.700L8 28l-2.700 1.300L4 32l-1.300-2.700L0 28l2.700-1.300z" fill="#d97ff2"/></svg>
  </div>
  <div class="flex [&>span]:w-[49px] [&>span]:flex [&>span]:flex-col [&>span]:items-center [&>span]:justify-center [&_svg]:w-[24px] [&_svg]:h-[24px] [&_i]:w-[40px] [&_i]:h-[2px] [&_i]:bg-[#0078d7] [&_i]:border-r-[8px] [&_i]:border-[#62a9e3] [&_svg]:my-auto">
    <span><svg class="scale-[.72]"><use href="#ring"/></svg></span><span class="mr-px"><svg class="scale-[.72]"><use href="#tv"/></svg></span>
    <span><svg><use href="#chrome"/></svg><i></i></span><span><svg><use href="#folder"/></svg><i></i></span><span><svg><use href="#snip"/></svg></span><span><svg><use href="#store"/></svg></span><span><svg><use href="#zoomi"/></svg></span><span><svg><use href="#sticky"/></svg><i></i></span><span><svg><use href="#rec"/></svg></span><span><svg><use href="#photos"/></svg><i></i></span><span><svg><use href="#note"/></svg><b class="w-[40px] h-[2px] bg-[#0078d7]"></b></span><span class="bg-[#edf4f7]"><svg><use href="#cone"/></svg><b class="w-full h-[2px] bg-[#0078d7]"></b></span>
  </div>
  <div class="flex-1 flex items-center justify-end text-[12px] tracking-[-0.4px] leading-[17px] text-[#111]">
    <svg class="w-[13px] h-[9px]"><use href="#chev"/></svg><svg class="ml-[9px] w-[16px] h-[16px]"><use href="#plus"/></svg><svg class="ml-[11px] w-[13px] h-[13px]"><use href="#wifi"/></svg>
    <span class="ml-[6px] w-[30px] text-center">ENG<br>US</span><span class="ml-[5px] w-[66px] text-center whitespace-nowrap">14:03<br>07-07-2022</span>
    <span class="ml-[14px] relative w-[24px] h-[24px]"><svg class="w-[24px] h-[24px]"><use href="#msg"/></svg><span class="absolute left-[11px] top-[7px] w-[9px] text-center font-semibold">1</span></span><i class="ml-[13px] mr-[4px] w-px h-full bg-[#b3c2cb]"></i>
  </div>
</footer>
</body>
</html>
